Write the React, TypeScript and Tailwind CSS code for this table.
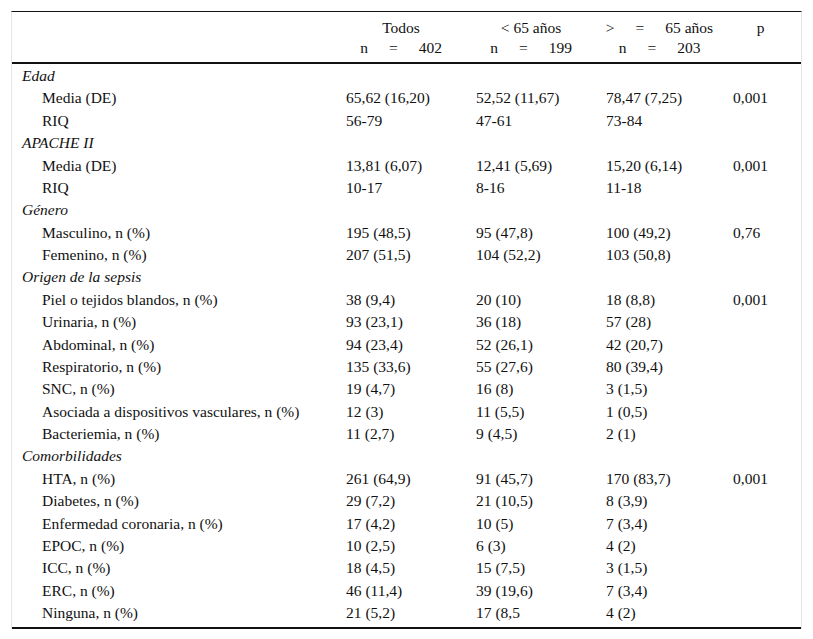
import React from "react";

type Row = { kind: "section"; label: string } | { kind: "item"; label: string; v: [string, string, string, string] };

const rows: Row[] = [
  { kind: "section", label: "Edad" },
  { kind: "item", label: "Media (DE)", v: ["65,62 (16,20)", "52,52 (11,67)", "78,47 (7,25)", "0,001"] },
  { kind: "item", label: "RIQ", v: ["56-79", "47-61", "73-84", ""] },
  { kind: "section", label: "APACHE II" },
  { kind: "item", label: "Media (DE)", v: ["13,81 (6,07)", "12,41 (5,69)", "15,20 (6,14)", "0,001"] },
  { kind: "item", label: "RIQ", v: ["10-17", "8-16", "11-18", ""] },
  { kind: "section", label: "Género" },
  { kind: "item", label: "Masculino, n (%)", v: ["195 (48,5)", "95 (47,8)", "100 (49,2)", "0,76"] },
  { kind: "item", label: "Femenino, n (%)", v: ["207 (51,5)", "104 (52,2)", "103 (50,8)", ""] },
  { kind: "section", label: "Origen de la sepsis" },
  { kind: "item", label: "Piel o tejidos blandos, n (%)", v: ["38 (9,4)", "20 (10)", "18 (8,8)", "0,001"] },
  { kind: "item", label: "Urinaria, n (%)", v: ["93 (23,1)", "36 (18)", "57 (28)", ""] },
  { kind: "item", label: "Abdominal, n (%)", v: ["94 (23,4)", "52 (26,1)", "42 (20,7)", ""] },
  { kind: "item", label: "Respiratorio, n (%)", v: ["135 (33,6)", "55 (27,6)", "80 (39,4)", ""] },
  { kind: "item", label: "SNC, n (%)", v: ["19 (4,7)", "16 (8)", "3 (1,5)", ""] },
  { kind: "item", label: "Asociada a dispositivos vasculares, n (%)", v: ["12 (3)", "11 (5,5)", "1 (0,5)", ""] },
  { kind: "item", label: "Bacteriemia, n (%)", v: ["11 (2,7)", "9 (4,5)", "2 (1)", ""] },
  { kind: "section", label: "Comorbilidades" },
  { kind: "item", label: "HTA, n (%)", v: ["261 (64,9)", "91 (45,7)", "170 (83,7)", "0,001"] },
  { kind: "item", label: "Diabetes, n (%)", v: ["29 (7,2)", "21 (10,5)", "8 (3,9)", ""] },
  { kind: "item", label: "Enfermedad coronaria, n (%)", v: ["17 (4,2)", "10 (5)", "7 (3,4)", ""] },
  { kind: "item", label: "EPOC, n (%)", v: ["10 (2,5)", "6 (3)", "4 (2)", ""] },
  { kind: "item", label: "ICC, n (%)", v: ["18 (4,5)", "15 (7,5)", "3 (1,5)", ""] },
  { kind: "item", label: "ERC, n (%)", v: ["46 (11,4)", "39 (19,6)", "7 (3,4)", ""] },
  { kind: "item", label: "Ninguna, n (%)", v: ["21 (5,2)", "17 (8,5", "4 (2)", ""] },
];

function Spaced({ parts }: { parts: string[] }) {
  return (
    <span className="flex items-baseline gap-x-[21px] whitespace-nowrap">
      {parts.map((p, i) => (
        <span key={i} className="whitespace-nowrap">
          {p}
        </span>
      ))}
    </span>
  );
}

const grid = "grid grid-cols-[334px_130px_130px_127px_1fr]";

export default function App() {
  return (
    <div className="bg-white w-[813px] h-[639px] pt-[11px] px-[11px]" style={{ fontFamily: '"Liberation Serif", "Times New Roman", serif' }}>
      <div className="border-t border-t-[#111] border-x border-x-[#e6e6e6] text-[15.5px] text-[#111]">
        <div className={`${grid} pt-[6px] pb-[4px] border-b-2 border-b-[#111] leading-[20px]`}>
          <div />
          <div className="flex flex-col items-center pr-[20px]">
            <span className="whitespace-nowrap">Todos</span>
            <Spaced parts={["n", "=", "402"]} />
          </div>
          <div className="flex flex-col items-center pr-[20px]">
            <span className="whitespace-nowrap">&lt; 65 años</span>
            <Spaced parts={["n", "=", "199"]} />
          </div>
          <div className="flex flex-col items-center pr-[20px]">
            <Spaced parts={[">", "=", "65 años"]} />
            <Spaced parts={["n", "=", "203"]} />
          </div>
          <div className="flex flex-col items-center pr-[13px]">
            <span>p</span>
          </div>
        </div>
        <div className="pb-[4px] border-b-2 border-b-[#111]">
          {rows.map((r, i) =>
            r.kind === "section" ? (
              <div key={i} className="h-[22.375px] flex items-center pl-[10px] italic">
                {r.label}
              </div>
            ) : (
              <div key={i} className={`${grid} h-[22.375px] items-center`}>
                <div className="pl-[30px] whitespace-nowrap">{r.label}</div>
                {r.v.map((c, j) => (
                  <div key={j} className="whitespace-nowrap">
                    {c}
                  </div>
                ))}
              </div>
            )
          )}
        </div>
      </div>
    </div>
  );
}
